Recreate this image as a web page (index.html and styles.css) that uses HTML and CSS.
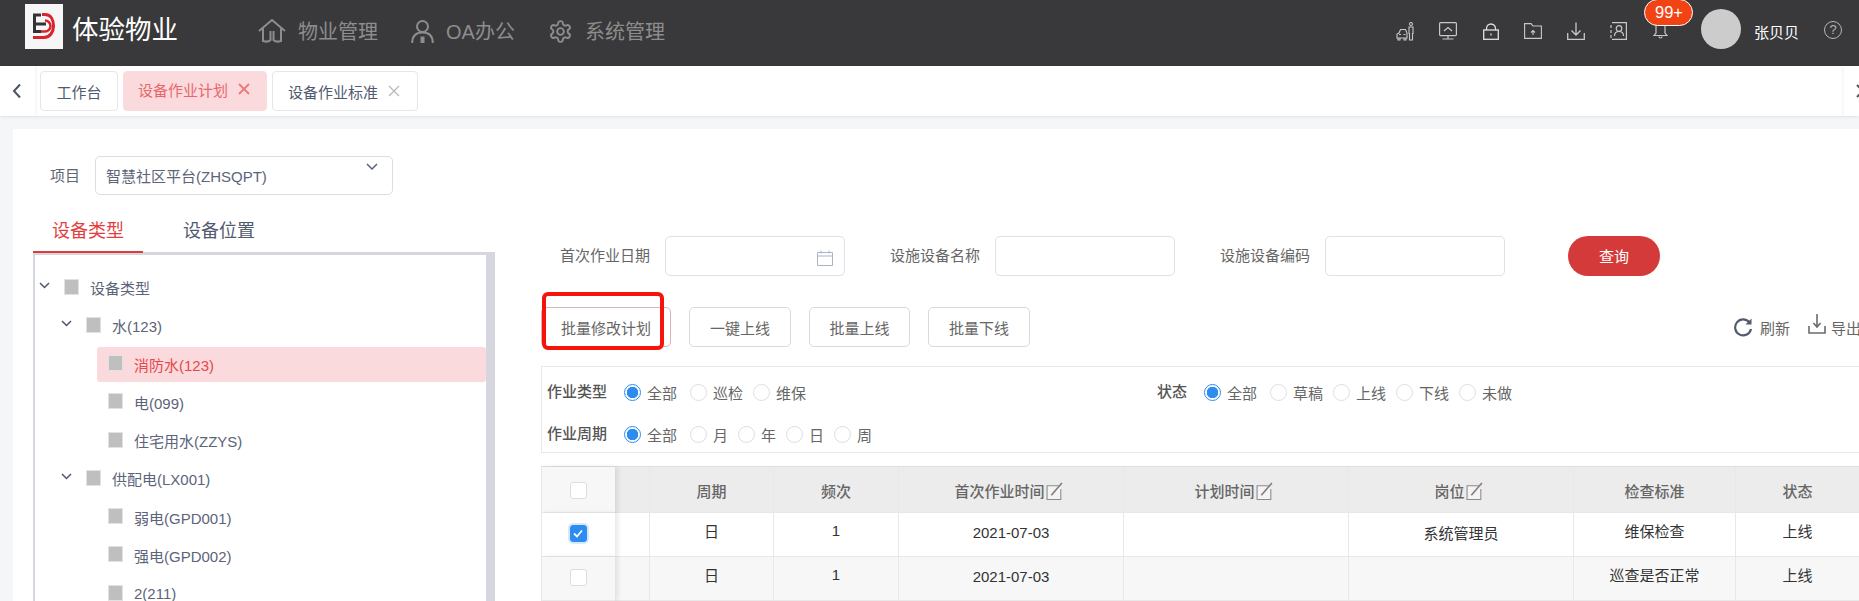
FILE: index.html
```html
<!DOCTYPE html>
<html lang="zh">
<head>
<meta charset="utf-8">
<title>设备作业计划</title>
<link rel="stylesheet" href="styles.css">
</head>
<body>
<header class="topbar">
  <div class="logo">
    <svg width="22" height="26" viewBox="0 0 22 26"><path d="M9 1.500h3c6 0 8.500 5.500 8.500 11.500S17 24.500 11 24.500H0" fill="none" stroke="#d9232e" stroke-width="3"/><path d="M12 7.500a5.500 5.500 0 0 1 0 11H7" fill="none" stroke="#d9232e" stroke-width="2.500"/><path d="M1.500 1v19M0 2h8M3 11h10M0 18.500h8" fill="none" stroke="#333" stroke-width="3"/></svg>
  </div>
  <div class="brand">体验物业</div>
  <nav class="nav">
    <a class="nav-item">
      <svg width="28" height="24" viewBox="0 0 28 24" class="nav-ic"><path d="M1 12 14 1l13 11M5 9.500V22c3 1 6 .500 7.500-1v-9M23 9.500V22c-3 1-6 .500-7.500-1v-9" fill="none" stroke="#8d8d8d" stroke-width="2"/></svg>
      物业管理</a>
    <a class="nav-item">
      <svg width="23" height="23" viewBox="0 0 23 23" class="nav-ic"><circle cx="11.500" cy="6.500" r="5.500" fill="none" stroke="#8d8d8d" stroke-width="2"/><path d="M1.200 23c0-6 3-10.500 10.300-10.500S21.800 17 21.800 23" fill="none" stroke="#8d8d8d" stroke-width="2"/><path d="M11.500 16.500V23" stroke="#8d8d8d" stroke-width="4"/></svg>
      OA办公</a>
    <a class="nav-item">
      <svg width="25" height="25" viewBox="0 0 24 24" class="nav-ic"><path d="M12.220 2h-.44a2 2 0 0 0-2 2v.18a2 2 0 0 1-1 1.730l-.43.25a2 2 0 0 1-2 0l-.15-.08a2 2 0 0 0-2.730.73l-.22.38a2 2 0 0 0 .73 2.730l.15.1a2 2 0 0 1 1 1.720v.51a2 2 0 0 1-1 1.740l-.15.09a2 2 0 0 0-.73 2.730l.22.38a2 2 0 0 0 2.730.73l.15-.08a2 2 0 0 1 2 0l.43.25a2 2 0 0 1 1 1.730V20a2 2 0 0 0 2 2h.44a2 2 0 0 0 2-2v-.18a2 2 0 0 1 1-1.730l.43-.25a2 2 0 0 1 2 0l.15.08a2 2 0 0 0 2.730-.73l.22-.39a2 2 0 0 0-.73-2.730l-.15-.08a2 2 0 0 1-1-1.740v-.5a2 2 0 0 1 1-1.740l.15-.09a2 2 0 0 0 .73-2.730l-.22-.38a2 2 0 0 0-2.730-.73l-.15.08a2 2 0 0 1-2 0l-.43-.25a2 2 0 0 1-1-1.730V4a2 2 0 0 0-2-2z" fill="none" stroke="#8d8d8d" stroke-width="1.800"/><circle cx="12" cy="12" r="3.200" fill="none" stroke="#8d8d8d" stroke-width="1.800"/></svg>
      系统管理</a>
  </nav>
  <div class="actions">
    <span class="action"><svg width="19" height="19" viewBox="0 0 19 19" fill="none" stroke="#c8c8c8" stroke-width="1.100"><circle cx="15" cy="2" r="1.500"/><path d="M13 5h4v6.500h-.5V18h-3v-6.500H13zM1 16v-4l2-1 1.500-3.500h5L11 11v5zM2 16v2h2v-2M8 16v2h2v-2M3 12.500h2M7.500 12.500h2"/></svg></span>
    <span class="action"><svg width="18" height="18" viewBox="0 0 18 18" fill="none" stroke="#c8c8c8" stroke-width="1.200"><rect x=".6" y=".6" width="16.800" height="13" rx="1"/><path d="m5 9 4-3.500L13 9M9 14v2.500M3.500 17h11"/></svg></span>
    <span class="action"><svg width="16" height="17" viewBox="0 0 16 17" fill="none" stroke="#e0e0e0" stroke-width="1.300"><rect x=".7" y="7" width="14.600" height="9.300"/><path d="M3.500 7V5.500a4.500 4.500 0 0 1 9 0V7M8 10.500v2"/></svg></span>
    <span class="action"><svg width="18" height="16" viewBox="0 0 18 16" fill="none" stroke="#c8c8c8" stroke-width="1.100"><path d="M.6.600h6.500L9 3h8.400v12.400H.6zM9 12V7.500M7 9.500l2-2 2 2"/></svg></span>
    <span class="action"><svg width="18" height="18" viewBox="0 0 18 18" fill="none" stroke="#c8c8c8" stroke-width="1.300"><path d="M.7 11v6.300h16.600V11M9 .5V13M4.500 8.500 9 13l4.500-4.500"/></svg></span>
    <span class="action"><svg width="17" height="18" viewBox="0 0 17 18" fill="none" stroke="#c8c8c8" stroke-width="1.200"><path d="M2 .6h14.400v16.800H2M1 3v3M1 8v3M1 13v3"/><circle cx="9" cy="6.500" r="2.800"/><path d="M4.500 14c0-3 2-4.500 4.500-4.500s4.500 1.500 4.500 4.500"/></svg></span>
    <span class="action bell">
      <svg width="15" height="17" viewBox="0 0 15 17" fill="none" stroke="#c8c8c8" stroke-width="1.200"><path d="M3 2v9l-2 2.500h13L12 11V2M6 14.500a1.500 1.500 0 0 0 3 0"/></svg>
      <span class="badge">99+</span>
    </span>
    <span class="avatar"></span>
    <span class="user">张贝贝</span>
    <span class="help">?</span>
  </div>
</header>

<div class="tabbar">
  <div class="tab-back"><svg width="10" height="16" viewBox="0 0 10 16"><path d="M8 1.500 2 8l6 6.500" fill="none" stroke="#4a5568" stroke-width="2"/></svg></div>
  <div class="tab tab-home">工作台</div>
  <div class="tab tab-on">设备作业计划<svg class="tab-x" width="12" height="12" viewBox="0 0 12 12"><path d="m1 1 10 10M11 1 1 11" fill="none" stroke="#ec7a7c" stroke-width="1.800"/></svg></div>
  <div class="tab tab-std">设备作业标准<svg class="tab-x" width="12" height="12" viewBox="0 0 12 12"><path d="m1 1 10 10M11 1 1 11" fill="none" stroke="#b5b5b5" stroke-width="1.100"/></svg></div>
  <div class="tab-next"><svg width="8" height="14" viewBox="0 0 8 14"><path d="m1 1 6 6-6 6" fill="none" stroke="#555" stroke-width="2"/></svg></div>
</div>

<main class="page">
  <div class="panel">
    <aside class="side">
      <div class="project">
        <span class="project-label">项目</span>
        <div class="select">智慧社区平台(ZHSQPT)
          <svg class="select-arrow" width="12" height="7" viewBox="0 0 12 7"><path d="m1 1 5 5 5-5" fill="none" stroke="#59637a" stroke-width="1.500"/></svg>
        </div>
      </div>
      <div class="side-tabs">
        <div class="side-tab side-tab-on">设备类型</div>
        <div class="side-tab">设备位置</div>
      </div>
      <div class="tree-box">
        <ul class="tree">
          <li class="node lv0"><svg class="caret" width="11" height="7" viewBox="0 0 11 7"><path d="m1 1 4.500 4.500L10 1" fill="none" stroke="#4d566b" stroke-width="1.500"/></svg><i class="box"></i>设备类型</li>
          <li class="node lv1"><svg class="caret" width="11" height="7" viewBox="0 0 11 7"><path d="m1 1 4.500 4.500L10 1" fill="none" stroke="#4d566b" stroke-width="1.500"/></svg><i class="box"></i>水(123)</li>
          <li class="node lv2 node-on"><i class="box"></i>消防水(123)</li>
          <li class="node lv2"><i class="box"></i>电(099)</li>
          <li class="node lv2"><i class="box"></i>住宅用水(ZZYS)</li>
          <li class="node lv1"><svg class="caret" width="11" height="7" viewBox="0 0 11 7"><path d="m1 1 4.500 4.500L10 1" fill="none" stroke="#4d566b" stroke-width="1.500"/></svg><i class="box"></i>供配电(LX001)</li>
          <li class="node lv2"><i class="box"></i>弱电(GPD001)</li>
          <li class="node lv2"><i class="box"></i>强电(GPD002)</li>
          <li class="node lv2"><i class="box"></i>2(211)</li>
        </ul>
        <div class="scroll"></div>
      </div>
    </aside>

    <section class="content">
      <div class="query">
        <label class="q-label q-first">首次作业日期</label>
        <div class="input input-date">
          <svg width="16" height="16" viewBox="0 0 16 16" fill="none" stroke="#a9b4c6" stroke-width="1"><path d="M.5 2.500h15v13H.5zM.5 6h15M4 .5v3M12 .5v3"/></svg>
        </div>
        <label class="q-label q-second">设施设备名称</label>
        <div class="input"></div>
        <label class="q-label q-third">设施设备编码</label>
        <div class="input"></div>
        <button class="btn-query">查询</button>
      </div>

      <div class="toolbar">
        <button class="btn btn-w130 btn-marked">批量修改计划</button>
        <button class="btn btn-w102">一键上线</button>
        <button class="btn btn-w101">批量上线</button>
        <button class="btn btn-w102">批量下线</button>
        <div class="tools">
          <span class="tool"><svg width="20" height="20" viewBox="0 0 20 20" fill="none" stroke="#515a6e" stroke-width="2.200"><path d="M16.500 5.500A8 8 0 1 0 18 12"/><path d="M18.500 1.500v6h-6z" fill="#515a6e" stroke="none"/></svg>刷新</span>
          <span class="tool tool-export"><svg width="18" height="20" viewBox="0 0 18 20" fill="none" stroke="#6b6b6b" stroke-width="1.600"><path d="M1 12v7h16v-7M9 0v12M5.500 9 9 13l3.500-4"/></svg>导出</span>
        </div>
        <div class="mark"></div>
      </div>

      <div class="filter">
        <div class="f-row">
          <span class="f-label">作业类型</span>
          <span class="radio on"><i></i>全部</span>
          <span class="radio"><i></i>巡检</span>
          <span class="radio"><i></i>维保</span>
          <span class="f-label f-status">状态</span>
          <span class="radio on"><i></i>全部</span>
          <span class="radio"><i></i>草稿</span>
          <span class="radio"><i></i>上线</span>
          <span class="radio"><i></i>下线</span>
          <span class="radio"><i></i>未做</span>
        </div>
        <div class="f-row">
          <span class="f-label">作业周期</span>
          <span class="radio on"><i></i>全部</span>
          <span class="radio"><i></i>月</span>
          <span class="radio"><i></i>年</span>
          <span class="radio"><i></i>日</span>
          <span class="radio"><i></i>周</span>
        </div>
      </div>

      <table class="grid">
        <colgroup>
          <col class="c-check"><col class="c-gap"><col class="c-124"><col class="c-125"><col class="c-225"><col class="c-225"><col class="c-225"><col class="c-162"><col class="c-124">
        </colgroup>
        <thead>
          <tr>
            <th class="fixed"><i class="chk"></i></th>
            <th></th>
            <th>周期</th>
            <th>频次</th>
            <th class="th-edit">首次作业时间<svg class="edit" width="18" height="20" viewBox="0 0 17 18"><path d="M12 4H1v13h13V7" fill="#f4f4f4" stroke="#8b8b8b"/><path d="M5 13 15 1.500" stroke="#8a7d7d" stroke-width="1.600"/></svg></th>
            <th class="th-edit">计划时间<svg class="edit" width="18" height="20" viewBox="0 0 17 18"><path d="M12 4H1v13h13V7" fill="#f4f4f4" stroke="#8b8b8b"/><path d="M5 13 15 1.500" stroke="#8a7d7d" stroke-width="1.600"/></svg></th>
            <th class="th-edit">岗位<svg class="edit" width="18" height="20" viewBox="0 0 17 18"><path d="M12 4H1v13h13V7" fill="#f4f4f4" stroke="#8b8b8b"/><path d="M5 13 15 1.500" stroke="#8a7d7d" stroke-width="1.600"/></svg></th>
            <th>检查标准</th>
            <th>状态</th>
          </tr>
        </thead>
        <tbody>
          <tr>
            <td class="fixed"><i class="chk chk-on"><svg width="10" height="9" viewBox="0 0 10 9"><path d="m1 4.500 3 3 5-6" fill="none" stroke="#fff" stroke-width="1.800"/></svg></i></td>
            <td></td>
            <td class="up">日</td>
            <td class="up">1</td>
            <td>2021-07-03</td>
            <td></td>
            <td>系统管理员</td>
            <td class="up">维保检查</td>
            <td class="up">上线</td>
          </tr>
          <tr>
            <td class="fixed"><i class="chk"></i></td>
            <td></td>
            <td class="up">日</td>
            <td class="up">1</td>
            <td>2021-07-03</td>
            <td></td>
            <td></td>
            <td class="up">巡查是否正常</td>
            <td class="up">上线</td>
          </tr>
        </tbody>
      </table>
    </section>
  </div>
</main>
</body>
</html>
```

FILE: styles.css
```css
* { box-sizing: border-box; }
html, body { margin: 0; padding: 0; }
body {
  width: 1859px;
  height: 601px;
  overflow: hidden;
  display: flex;
  flex-direction: column;
  font-family: "Liberation Sans", "Noto Sans CJK SC", sans-serif;
  font-size: 15px;
  color: #666;
  background: #f5f6f8;
}
i { font-style: normal; }
ul { list-style: none; margin: 0; padding: 0; }
button { font: inherit; cursor: pointer; }

/* top bar */
.topbar {
  flex: none;
  height: 66px;
  display: flex;
  align-items: flex-start;
  padding: 0 17px 0 25px;
  background: #39393b;
}
.logo {
  width: 38px;
  height: 45px;
  margin-top: 4px;
  padding-top: 9px;
  display: flex;
  justify-content: center;
  background: #f6f6f6;
}
.brand {
  margin: 12px 0 0 9px;
  font-size: 26.500px;
  line-height: 36px;
  color: #fff;
}
.nav { display: flex; margin: 13px 0 0 80px; gap: 33px; }
.nav-item {
  display: flex;
  align-items: center;
  gap: 12px;
  height: 34px;
  font-size: 20px;
  color: #8d8d8d;
}
.nav-ic { margin-top: 2px; }
.actions {
  margin-left: auto;
  height: 62px;
  display: flex;
  align-items: center;
}
.action {
  width: 42.500px;
  display: flex;
  justify-content: center;
}
.bell {
  position: relative;
  height: 24px;
  padding-top: 3px;
}
.badge {
  position: absolute;
  left: 5px;
  top: -20px;
  width: 49px;
  height: 27px;
  border: 1px solid #fff;
  border-radius: 14px;
  background: #f24314;
  color: #fff;
  font-size: 16.500px;
  line-height: 24px;
  text-align: center;
}
.avatar {
  width: 40px;
  height: 40px;
  margin: -4px 0 0 19px;
  border-radius: 50%;
  background: #ccc;
}
.user {
  margin-left: 13px;
  font-size: 15px;
  color: #fff;
}
.help {
  width: 18px;
  height: 18px;
  margin: -2px 0 0 25px;
  border: 1px solid #b5b5b5;
  border-radius: 50%;
  color: #b5b5b5;
  font-size: 13px;
  line-height: 16px;
  text-align: center;
}

/* tab strip */
.tabbar {
  flex: none;
  height: 50px;
  display: flex;
  align-items: flex-start;
  background: #fff;
  box-shadow: 0 1px 3px rgba(0, 0, 0, .08);
}
.tab-back {
  width: 35px;
  height: 50px;
  display: flex;
  align-items: center;
  padding-left: 12px;
  box-shadow: 2px 0 3px rgba(0, 0, 0, .04);
}
.tab {
  height: 40px;
  margin: 5px 0 0 5px;
  border: 1px solid #e6e6e6;
  border-radius: 4px;
  display: flex;
  align-items: center;
  color: #515a6e;
}
.tab-home { width: 78px; justify-content: center; }
.tab-on {
  width: 144px;
  padding: 0 0 4px 14px;
  background: #fadadd;
  border-color: #fadadd;
  color: #e8686a;
}
.tab-std { width: 146px; padding-left: 15px; }
.tab-x { margin-left: 10px; }
.tab-next {
  margin-left: auto;
  width: 15px;
  height: 50px;
  padding: 18px 0 0 12px;
  overflow: hidden;
  box-shadow: -2px 0 3px rgba(0, 0, 0, .04);
}

/* page */
.page {
  flex: 1;
  min-height: 0;
  padding: 13px 0 0 13px;
}
.panel {
  height: 100%;
  display: flex;
  background: #fff;
}
.side {
  flex: none;
  width: 482px;
  padding: 27px 0 0 20px;
  display: flex;
  flex-direction: column;
}
.project { display: flex; align-items: center; }
.project-label { margin: -3px 15px 0 17px; color: #5f6675; }
.select {
  position: relative;
  width: 298px;
  height: 39px;
  padding-left: 10px;
  border: 1px solid #ddd;
  border-radius: 5px;
  line-height: 40px;
  color: #5c6479;
}
.select-arrow { position: absolute; right: 14px; top: 6px; }
.side-tabs {
  display: flex;
  margin: 16px 0 -1px;
  height: 42px;
}
.side-tab {
  position: relative;
  padding: 0 40px 0 19px;
  font-size: 18px;
  line-height: 40px;
  color: #515a6e;
}
.side-tab + .side-tab { padding-left: 40px; }
.side-tab-on {
  padding-right: 19px;
  color: #e33e3e;
  border-bottom: 2px solid #dc3c3c;
}
.tree-box {
  flex: 1;
  min-height: 0;
  width: 462px;
  display: flex;
  border: solid #d6d7de;
  border-width: 3px 2px 0;
  overflow: hidden;
}
.tree {
  flex: 1;
  min-width: 0;
  padding-top: 13.500px;
}
.scroll { flex: none; width: 7px; background: #d5d6df; }
.node {
  height: 38.250px;
  display: flex;
  align-items: center;
  color: #5c6479;
}
.lv0 { padding-left: 4px; }
.lv1 { padding-left: 26px; }
.lv2 { padding-left: 74px; }
.caret { flex: none; margin: -4px 15px 0 0; }
.box {
  flex: none;
  width: 13px;
  height: 14px;
  margin: -2px 12px 0 0;
  background: #bfbfbf;
  box-shadow: 0 0 0 1px #e2e2e2;
}
.node-on {
  height: 35px;
  margin: 1.625px 0 1.625px 62px;
  padding-left: 12px;
  border-radius: 3px;
  background: #fadadd;
  color: #e8484a;
}

/* main column */
.content {
  flex: 1;
  min-width: 0;
  padding: 107px 0 0 46px;
  overflow: hidden;
}
.query { display: flex; align-items: center; }
.q-label { color: #666; }
.q-first { margin: -3px 15px 0 19px; }
.q-second { margin: -3px 15px 0 45px; }
.q-third { margin: -3px 15px 0 45px; }
.input {
  width: 180px;
  height: 40px;
  border: 1px solid #e0e0e6;
  border-radius: 5px;
  background: #fff;
}
.input-date {
  display: flex;
  align-items: center;
  justify-content: flex-end;
  padding: 3px 11px 0 0;
}
.btn-query {
  width: 92px;
  height: 40px;
  margin-left: 63px;
  padding: 0 0 2px;
  border: 0;
  border-radius: 20px;
  background: #d53a3b;
  color: #fff;
}
.toolbar {
  position: relative;
  display: flex;
  align-items: center;
  height: 40px;
  margin-top: 31px;
  gap: 18px;
}
.btn {
  height: 40px;
  padding: 0;
  border: 1px solid #d8d8e0;
  border-radius: 5px;
  background: #fff;
  color: #666;
}
.btn-w130 { width: 130px; }
.btn-w102 { width: 102px; }
.btn-w101 { width: 101px; }
.btn-marked { border-color: #dcb4b8; }
.mark {
  position: absolute;
  left: 1px;
  top: -15px;
  width: 122px;
  height: 58px;
  border: 4px solid #f5130a;
  border-radius: 6px;
}
.tools {
  display: flex;
  gap: 18px;
  margin: 0 -2px 0 auto;
  color: #666;
}
.tool { display: flex; align-items: center; gap: 7px; }
.tool-export { gap: 5px; }
.tool-export svg { margin-top: -6px; }
.filter {
  height: 87px;
  margin: 19px -20px 0 0;
  padding: 4px 0 0 5px;
  border: 1px solid #e8e8ec;
}
.f-row {
  height: 42px;
  display: flex;
  align-items: center;
}
.f-label {
  width: 60px;
  margin: -4px 17px 0 0;
  font-weight: 500;
  color: #555;
  white-space: nowrap;
}
.f-status { width: 30px; margin-left: 341px; }
.radio {
  display: flex;
  align-items: center;
  gap: 6px;
  margin-right: 10px;
  color: #666;
}
.radio i {
  width: 17px;
  height: 17px;
  border: 1px solid #dcdee2;
  border-radius: 50%;
}
.radio.on { margin-right: 13px; }
.radio.on i {
  border-color: #2d8cf0;
  background: radial-gradient(circle, #2d8cf0 0 5.500px, #fff 6px);
}

/* table */
.grid {
  width: 1319px;
  margin-top: 13px;
  table-layout: fixed;
  border-collapse: separate;
  border-spacing: 0;
  border-top: 1px solid #dedee2;
  color: #333;
}
.c-check { width: 74px; }
.c-gap { width: 35px; }
.c-125 { width: 125px; }
.c-225 { width: 225px; }
.c-162 { width: 162px; }
.c-124 { width: 124px; }
.grid th, .grid td {
  padding: 0 0 4px;
  text-align: center;
  border-right: 1px solid #e8e8e8;
  border-bottom: 1px solid #e8e8e8;
}
.grid th {
  height: 46px;
  padding: 2px 0 0;
  background: #ececec;
  font-weight: 500;
  color: #666;
}
.grid th.th-edit { padding-right: 4px; }
.grid td { height: 44px; }
.grid tbody tr:nth-child(2) td { background: #f7f7f7; }
.grid td.up { padding-bottom: 8px; }
.grid .fixed {
  position: relative;
  padding: 0 1px 0 0;
  background: #f7f7f7;
  border-left: 1px solid #e8e8e8;
  border-right: 0;
  box-shadow: 3px 0 5px rgba(0, 0, 0, .09);
}
.grid td.fixed { padding-bottom: 4px; }
.grid tbody tr:first-child .fixed { background: #fff; }
.edit { margin-left: 1px; vertical-align: -4px; }
.chk {
  display: inline-flex;
  align-items: center;
  justify-content: center;
  width: 17px;
  height: 17px;
  vertical-align: middle;
  border: 1px solid #dcdee2;
  border-radius: 3px;
  background: #fff;
}
.chk-on {
  border-color: #2d8cf0;
  background: #2d8cf0;
  box-shadow: 0 0 0 2px #d5e8fc;
}
```
